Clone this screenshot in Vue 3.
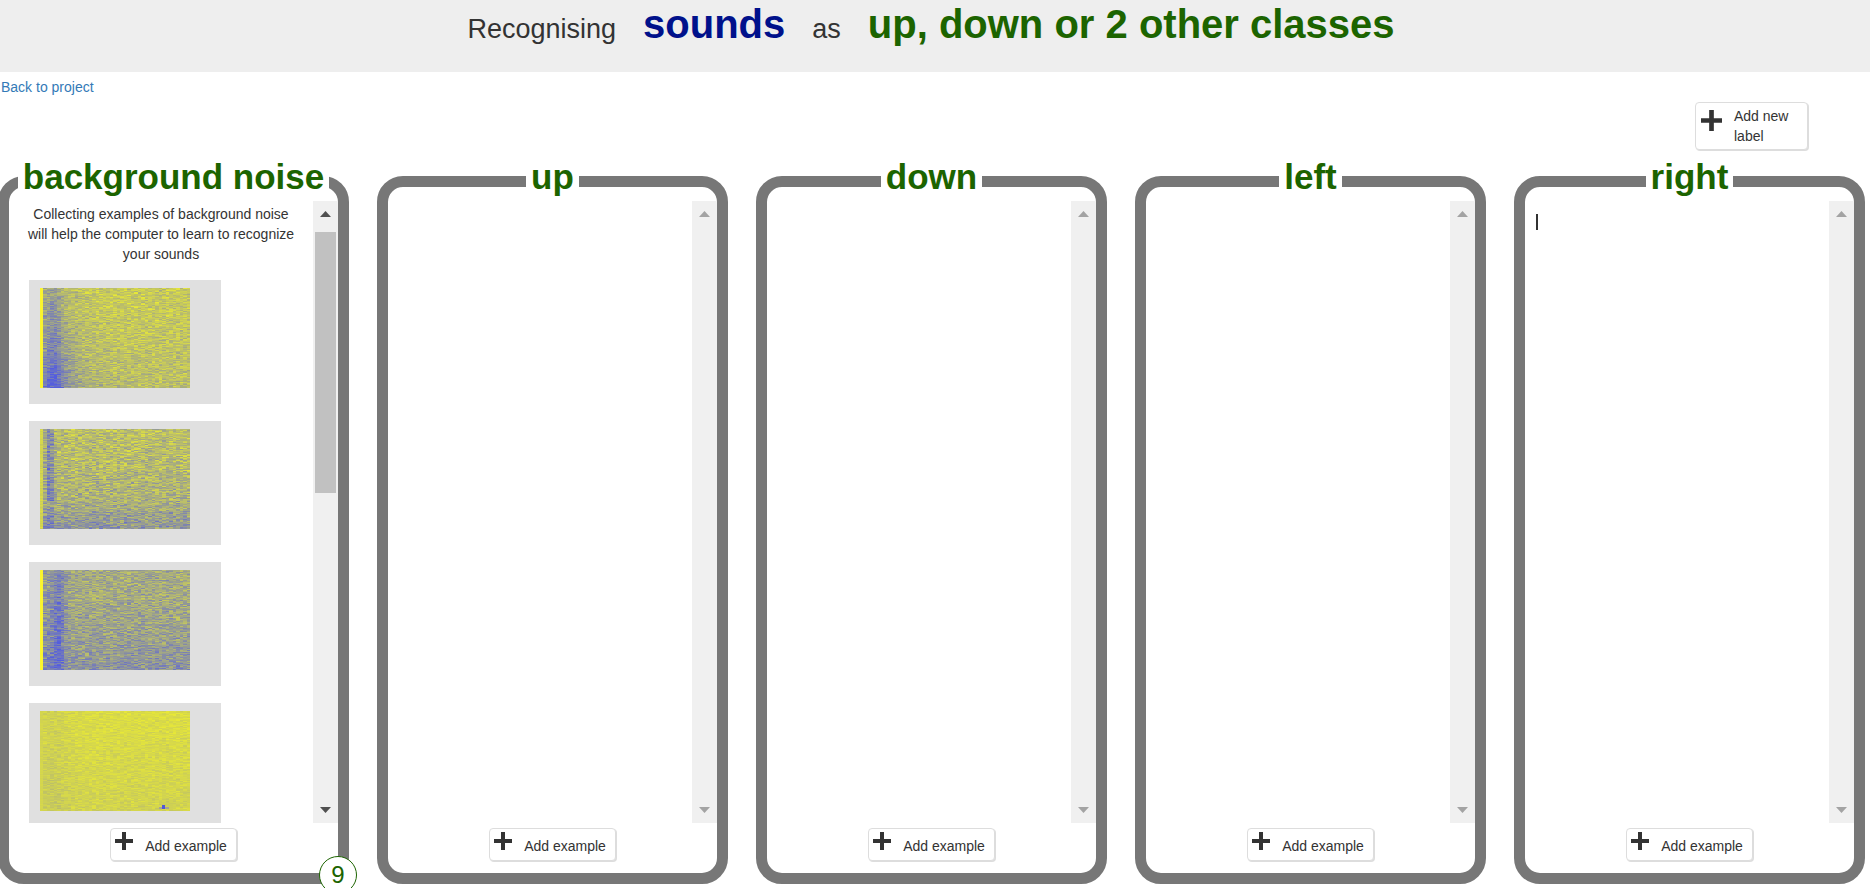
<script setup>
import { onMounted, ref } from 'vue'

const labels = [
  { name: 'background noise', hint: 'Collecting examples of background noise will help the computer to learn to recognize your sounds', examples: 4, count: 9 },
  { name: 'up' },
  { name: 'down' },
  { name: 'left' },
  { name: 'right', cursor: true },
]
const thumbSize = 46.6

const canvases = ref([])

// Per-recording level of "yellow" (1 = loud yellow, 0 = blue) at column x and row y, both 0..1
const profiles = [
  (x, y) => 0.57 + 0.19 * Math.sin(Math.min(x * 3.2, 1.7)) - 0.06 * y - 0.1 * y * y * (1 - x) - bump(x, 0.085, 0.05) * 0.18 - bump(x, 0.1, 0.14) * y * y * 0.2,
  (x, y) => 0.68 - 0.19 * y * y - bump(x, 0.055, 0.028) * (y < 0.72 ? 0.36 : 0.14) - (y > 0.82 ? 0.05 : 0),
  (x, y) => 0.56 - 0.15 * y * y - bump(x, 0.12, 0.04) * 0.26 - bump(x, 0.05, 0.05) * 0.12,
  (x, y) => 0.87 - 0.06 * y - bump(x, 0.08, 0.12) * 0.06,
]
const spread = [0.21, 0.26, 0.24, 0.1]
const edge = [[250, 245, 45], null, [250, 245, 45], null]

function bump(x, centre, width) {
  return Math.exp(-(((x - centre) / width) ** 2))
}

function random(seed) {
  let s = seed
  return () => {
    s = (s * 1664525 + 1013904223) >>> 0
    return s / 4294967296
  }
}

function draw(canvas, index) {
  const ctx = canvas.getContext('2d')
  const rnd = random(91 + index * 77)
  const columns = 43
  for (let c = 0; c < columns; c++) {
    const x0 = Math.round((c * 150) / columns)
    const x1 = Math.round(((c + 1) * 150) / columns)
    for (let y = 0; y < 100; y++) {
      const noise = (rnd() + rnd() - 1) * spread[index]
      let v = profiles[index](c / columns, y / 100) + noise
      if (c === 0) v = 0.82 + noise * 0.3
      v = Math.max(0.08, Math.min(0.94, v))
      ctx.fillStyle = c === 0 && edge[index]
        ? `rgb(${edge[index].join(',')})`
        : `rgb(${Math.round(70 + 172 * v)},${Math.round(80 + 162 * v)},${Math.round(238 - 195 * v)})`
      ctx.fillRect(x0, y, x1 - x0, 1)
    }
  }
  if (index === 3) {
    ctx.fillStyle = '#a5a29a'
    ctx.fillRect(119, 96, 10, 2)
    ctx.fillStyle = '#5058d8'
    ctx.fillRect(122, 94, 3, 4)
  }
}

onMounted(() => canvases.value.forEach((canvas, i) => draw(canvas, i)))
</script>

<template>
  <div class="page">
    <header class="banner">
      <h1 class="title">
        <span>Recognising</span>
        <strong class="kind">sounds</strong>
        <span>as</span>
        <strong class="classes">up, down or 2 other classes</strong>
      </h1>
    </header>
    <div class="toolbar">
      <a class="back" href="#">Back to project</a>
      <button class="btn new-label" type="button">
        <svg class="plus big" viewBox="0 0 18 18" aria-hidden="true"><path d="M7 0h4v7h7v4h-7v7H7v-7H0V7h7z" /></svg>
        <span>Add new label</span>
      </button>
    </div>
    <main class="buckets">
      <section v-for="label in labels" :key="label.name" class="bucket">
        <h2 class="name">{{ label.name }}</h2>
        <div class="scroller">
          <div class="content">
            <p v-if="label.hint" class="hint">{{ label.hint }}</p>
            <div v-for="n in label.examples || 0" :key="n" class="example">
              <canvas ref="canvases" width="150" height="100"></canvas>
            </div>
            <div v-if="label.cursor" class="cursor"></div>
          </div>
          <div class="track" :class="{ active: label.examples }">
            <svg class="arrow" viewBox="0 0 11 6" aria-hidden="true"><path d="M0 6 5.500 0 11 6z" /></svg>
            <div class="rail">
              <div v-if="label.examples" class="thumb" :style="{ height: thumbSize + '%' }"></div>
            </div>
            <svg class="arrow" viewBox="0 0 11 6" aria-hidden="true"><path d="M0 0h11L5.500 6z" /></svg>
          </div>
        </div>
        <button class="btn add" type="button">
          <svg class="plus" viewBox="0 0 18 18" aria-hidden="true"><path d="M7 0h4v7h7v4h-7v7H7v-7H0V7h7z" /></svg>
          <span>Add example</span>
        </button>
        <span v-if="label.count" class="badge">{{ label.count }}</span>
      </section>
    </main>
  </div>
</template>

<style>
body {
  margin: 0;
  background: #fff;
}
</style>

<style scoped>
* {
  box-sizing: border-box;
}
.page {
  display: flex;
  flex-direction: column;
  height: 100vh;
  overflow: hidden;
  font-family: "Liberation Sans", Arial, sans-serif;
  font-size: 14px;
  line-height: 20px;
  color: #333;
}
.banner {
  height: 72px;
  background: #eee;
}
.title {
  display: flex;
  justify-content: center;
  align-items: baseline;
  gap: 27px;
  margin: 0;
  padding-right: 8px;
  font-size: 27px;
  line-height: 48px;
  font-weight: 400;
}
.title strong {
  font-size: 40px;
}
.kind {
  color: #00118b;
}
.classes {
  color: #1c6400;
}
.toolbar {
  display: flex;
  justify-content: space-between;
  align-items: flex-start;
  height: 104px;
  padding: 5px 62px 0 1px;
}
.back {
  color: #337ab7;
  text-decoration: none;
}
.btn {
  display: flex;
  align-items: flex-start;
  border: 1px solid #ddd;
  border-radius: 4px;
  background: #fff;
  box-shadow: 1px 1px 0 #ddd;
  color: #333;
  font: inherit;
  text-align: left;
}
.plus {
  flex: none;
  width: 18px;
  height: 18px;
  fill: #333;
}
.plus.big {
  width: 21px;
  height: 21px;
  margin-top: 4px;
}
.new-label {
  width: 113px;
  margin-top: 25px;
  padding: 3px 5px;
  gap: 12px;
}
.buckets {
  flex: 1;
  display: grid;
  grid-template-columns: repeat(5, minmax(0, 1fr));
  gap: 28px;
  min-height: 0;
  margin: 0 5px 4px -2px;
}
.bucket {
  position: relative;
  display: flex;
  flex-direction: column;
  align-items: center;
  min-height: 0;
  padding-bottom: 12px;
  border: 11px solid #777;
  border-radius: 26px;
}
.name {
  margin: -30px 0 4px;
  padding: 0 5px;
  background: #fff;
  color: #1c6400;
  font-size: 35px;
  line-height: 40px;
  font-weight: 700;
  white-space: nowrap;
}
.scroller {
  display: flex;
  flex: 1;
  align-self: stretch;
  min-height: 0;
}
.content {
  flex: 1;
  min-width: 0;
  overflow: hidden;
}
.hint {
  margin: 3px 16px 16px;
  text-align: center;
}
.example {
  width: 192px;
  height: 124px;
  margin: 0 0 17px 20px;
  padding: 8px 11px;
  background: #e0e0e0;
}
.example canvas {
  display: block;
}
.cursor {
  width: 2px;
  height: 16px;
  margin: 13px 0 0 11px;
  background: #333;
}
.track {
  display: flex;
  flex-direction: column;
  align-items: center;
  width: 25px;
  padding: 10px 0;
  background: #f0f0f0;
}
.arrow {
  flex: none;
  width: 11px;
  height: 6px;
  fill: #a3a3a3;
}
.active .arrow {
  fill: #505050;
}
.rail {
  flex: 1;
  align-self: stretch;
  margin: 15px 2px;
}
.thumb {
  background: #c1c1c1;
}
.add {
  height: 33px;
  margin-top: 5px;
  padding: 3px 9px 0 4px;
  gap: 12px;
}
.add span {
  margin-top: 4px;
}
.badge {
  position: absolute;
  right: -19px;
  bottom: -21px;
  width: 38px;
  height: 38px;
  border: 1px solid #1c6400;
  border-radius: 50%;
  background: #fff;
  color: #1c6400;
  font-size: 24px;
  line-height: 36px;
  text-align: center;
}
</style>
